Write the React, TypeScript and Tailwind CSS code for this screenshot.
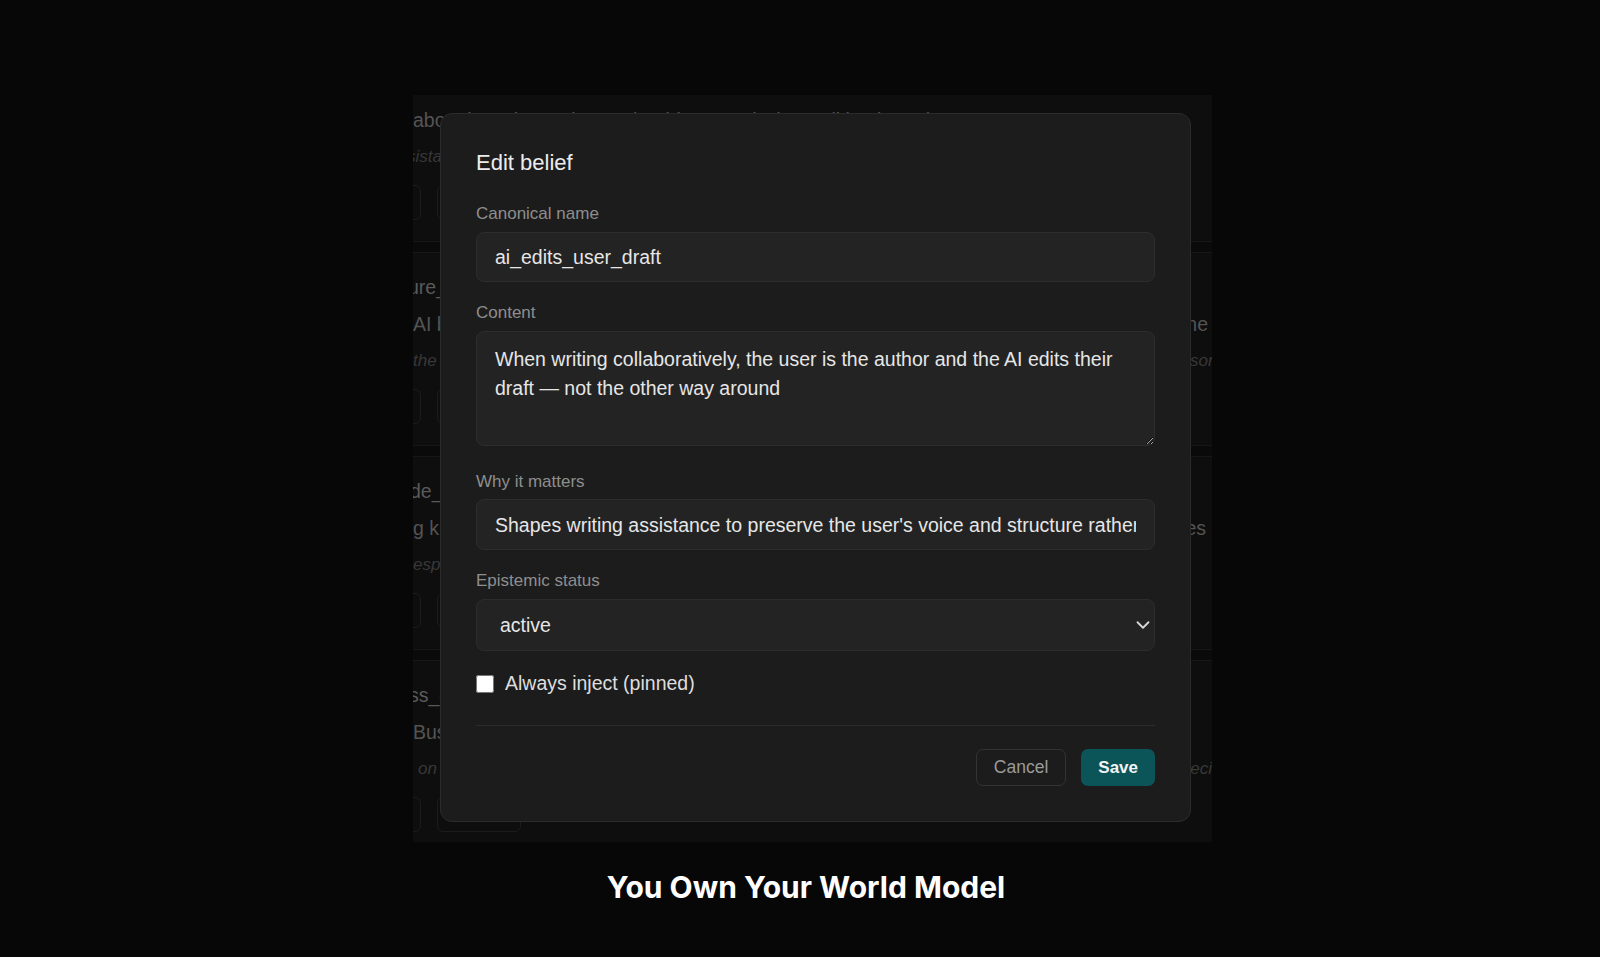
import React from "react";
import { ChevronDown } from "lucide-react";

type BgCard = {
  name: string;
  nameMl: string;
  content: string;
  contentRight: string;
  contentMr: string;
  why: string;
  whyMl: string;
  whyRight: string;
  whyMr: string;
};

const cards: BgCard[] = [
  {
    name: "writing_style_pref",
    nameMl: "ml-0",
    content: "about how the assistant should respond when editing long documents",
    contentRight: "",
    contentMr: "mr-0",
    why: "sistant drafts should stay close to the original phrasing",
    whyMl: "-ml-[6px]",
    whyRight: "",
    whyMr: "mr-0",
  },
  {
    name: "ure_authorship_boundaries",
    nameMl: "-ml-[5px]",
    content: "AI behaviour should make clear who wrote what in the",
    contentRight: "final one",
    contentMr: "mr-[4px]",
    why: "the user's own voice matters more than polish for",
    whyRight: "reasons",
    whyMl: "ml-0",
    whyMr: "-mr-[14px]",
  },
  {
    name: "de_tone_matching",
    nameMl: "-ml-[3px]",
    content: "g knowledge of tone should adapt to match the user's writing",
    contentRight: "styles",
    contentMr: "mr-[6px]",
    why: "especially for formal documents and public posts",
    whyMl: "ml-0",
    whyRight: "",
    whyMr: "mr-0",
  },
  {
    name: "ss_context_first",
    nameMl: "-ml-[4px]",
    content: "Business context is loaded before any drafting begins",
    contentRight: "",
    contentMr: "mr-0",
    why: "on client work the assistant should ask for project",
    whyMl: "ml-[5px]",
    whyRight: "specific",
    whyMr: "-mr-[17px]",
  },
];

function BackgroundCard({ card }: { card: BgCard }) {
  return (
    <div className="h-[194px] shrink-0 border-y border-[#171717] bg-[#0e0e0e] pt-[20px] whitespace-nowrap">
      <div className={`h-[28px] text-[19.5px] leading-[28px] text-[#5a5a5a] ${card.nameMl}`}>{card.name}</div>
      <div className="mt-[9px] flex h-[28px] justify-between text-[19.5px] leading-[28px] text-[#545454]">
        <span>{card.content}</span>
        <span className={card.contentMr}>{card.contentRight}</span>
      </div>
      <div className="mt-[10px] flex h-[26px] justify-between text-[17px] italic leading-[26px] text-[#383838]">
        <span className={card.whyMl}>{card.why}</span>
        <span className={card.whyMr}>{card.whyRight}</span>
      </div>
      <div className="mt-[15px] flex gap-[16px]">
        <div className="-ml-[50px] flex h-[35px] w-[58px] items-center justify-center rounded-[6px] border border-[#1c1c1c] text-[15px] text-[#2c2c2c]">
          Edit
        </div>
        <div className="flex h-[35px] w-[84px] items-center justify-center rounded-[6px] border border-[#1c1c1c] text-[15px] text-[#2c2c2c]">
          Archive
        </div>
      </div>
    </div>
  );
}

function EditBeliefModal() {
  return (
    <div className="absolute left-[27px] top-[18px] w-[751px] rounded-[12px] border border-[#2b2b2b] bg-[#1c1c1c] px-[35px] pb-[35px] pt-[35px]">
      <h2 className="mt-[1px] text-[22px] leading-[26px] text-[#ececec]">Edit belief</h2>

      <label className="mt-[28px] block text-[17px] leading-[20px] text-[#8e8e8e]">Canonical name</label>
      <input
        readOnly
        value="ai_edits_user_draft"
        className="mt-[8px] block h-[50px] w-full rounded-[8px] border border-[#2d2d2d] bg-[#232323] px-[18px] text-[19.5px] text-[#e6e6e6] outline-none"
      />

      <label className="mt-[21px] block text-[17px] leading-[20px] text-[#8e8e8e]">Content</label>
      <textarea
        readOnly
        rows={3}
        value="When writing collaboratively, the user is the author and the AI edits their draft — not the other way around"
        className="mt-[8px] block h-[115px] w-full resize-y rounded-[8px] border border-[#2d2d2d] bg-[#232323] px-[18px] py-[13px] text-[19.5px] leading-[29px] text-[#e6e6e6] outline-none [color-scheme:dark]"
      />

      <label className="mt-[26px] block text-[17px] leading-[20px] text-[#8e8e8e]">Why it matters</label>
      <input
        readOnly
        value="Shapes writing assistance to preserve the user's voice and structure rather than replacing it"
        className="mt-[7px] block h-[51px] w-full rounded-[8px] border border-[#2d2d2d] bg-[#232323] px-[18px] pt-[2px] text-[19.5px] text-[#e6e6e6] outline-none"
      />

      <label className="mt-[21px] block text-[17px] leading-[20px] text-[#8e8e8e]">Epistemic status</label>
      <div className="relative mt-[8px]">
        <select
          defaultValue="active"
          className="block h-[52px] w-full appearance-none rounded-[8px] border border-[#2d2d2d] bg-[#232323] pl-[23px] pt-[2px] text-[19.5px] text-[#e6e6e6] outline-none"
        >
          <option value="active">active</option>
          <option value="tentative">tentative</option>
          <option value="retired">retired</option>
        </select>
        <ChevronDown
          size={22}
          strokeWidth={2}
          className="pointer-events-none absolute right-[1px] top-1/2 -translate-y-1/2 text-[#d6d6d6]"
        />
      </div>

      <label className="mt-[18px] flex h-[29px] items-center gap-[11px] text-[19.5px] text-[#dedede]">
        <input type="checkbox" className="m-0 h-[18px] w-[18px]" />
        Always inject (pinned)
      </label>

      <div className="mt-[27px] h-px bg-[#2c2c2c]" />

      <div className="mt-[23px] flex justify-end gap-[15px]">
        <button className="h-[37px] rounded-[7px] border border-[#333333] bg-[#1c1c1c] px-[17px] text-[17.5px] text-[#9b9b9b]">
          Cancel
        </button>
        <button className="h-[37px] rounded-[7px] bg-[#0b5458] px-[17px] text-[17px] font-bold text-[#f4f4f4]">
          Save
        </button>
      </div>
    </div>
  );
}

export default function App() {
  return (
    <div className="flex h-[957px] w-full flex-col items-center bg-[#070707] font-['Liberation_Sans',Arial,sans-serif]">
      {/* app screenshot */}
      <div className="relative ml-[25px] mt-[95px] h-[747px] w-[799px] shrink-0 overflow-hidden bg-[#0a0a0a]">
        <div className="-mt-[47px] flex flex-col gap-[10px]">
          {cards.map((c) => (
            <BackgroundCard key={c.name} card={c} />
          ))}
        </div>
        <EditBeliefModal />
      </div>

      {/* caption */}
      <div className="ml-[12px] mt-[27px] font-['Inter',sans-serif] text-[30px] font-bold leading-[36px] text-white">
        You Own Your World Model
      </div>
    </div>
  );
}
